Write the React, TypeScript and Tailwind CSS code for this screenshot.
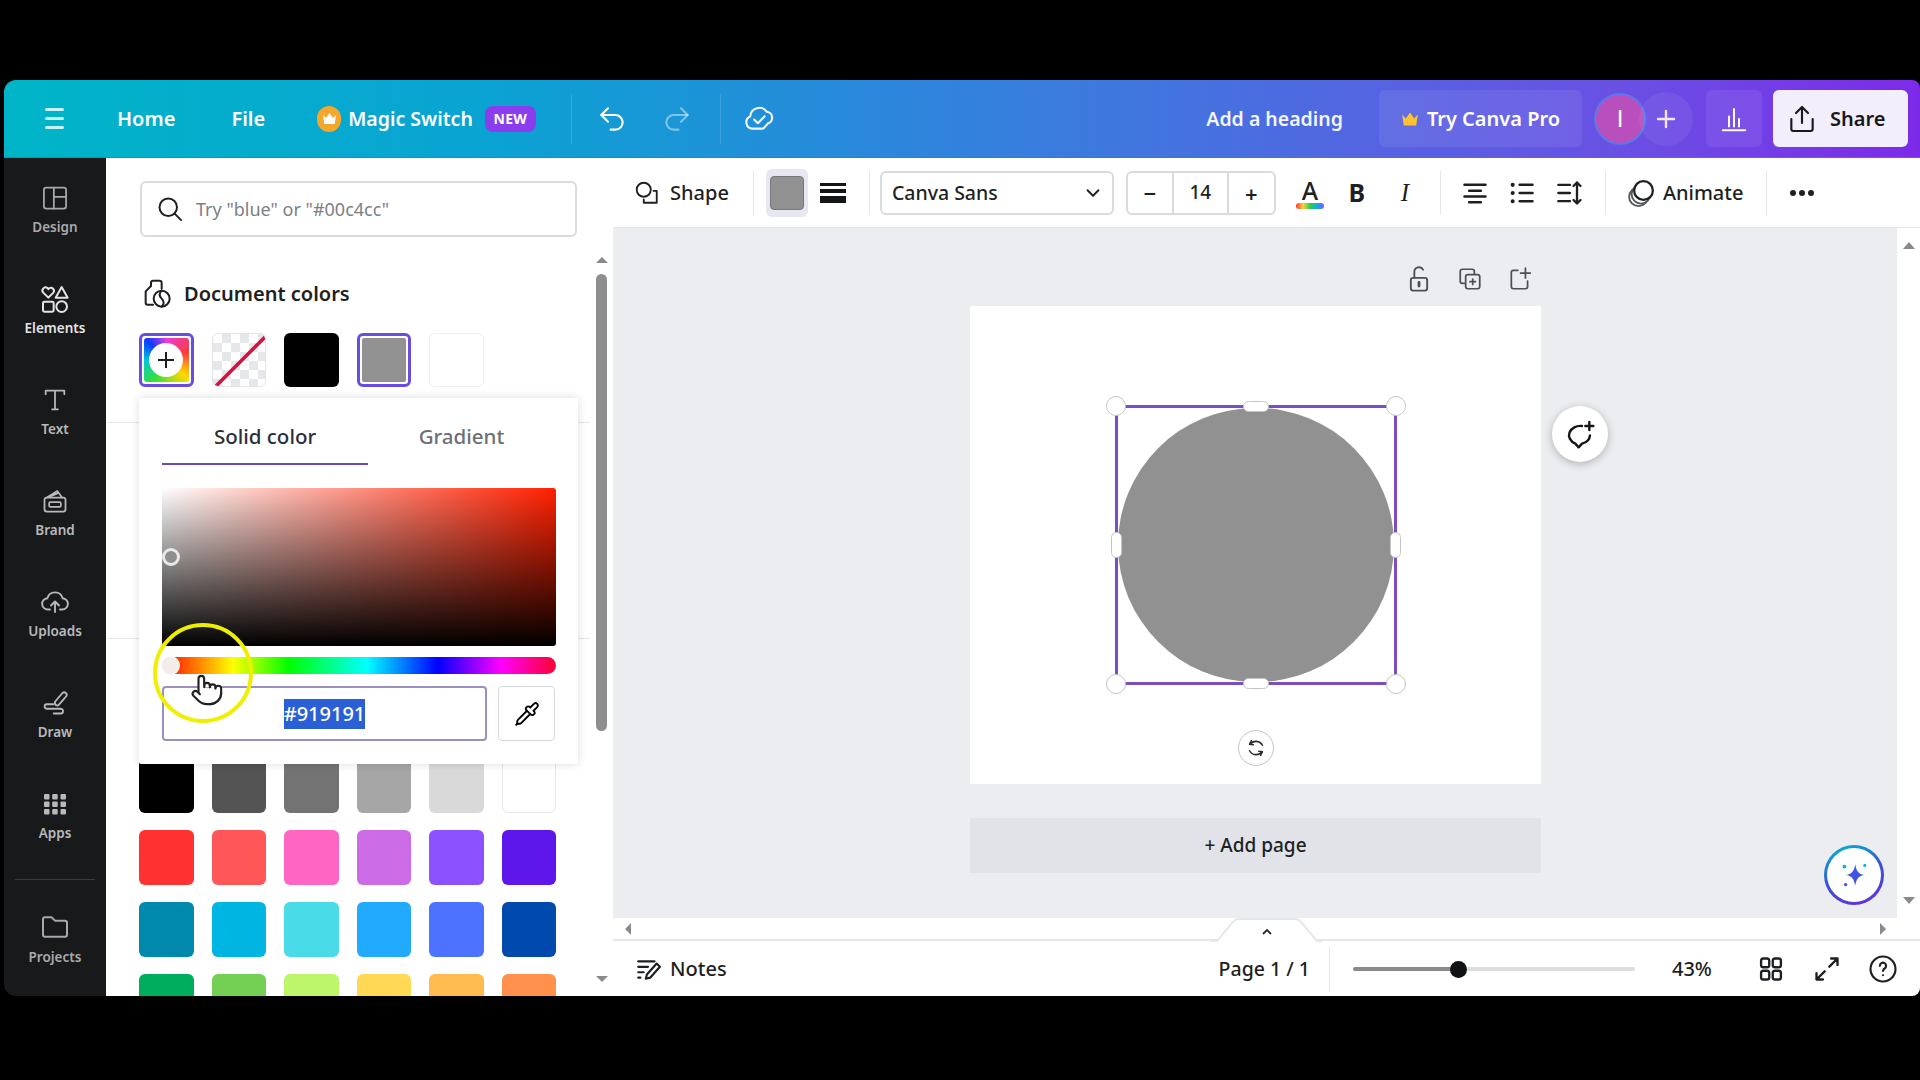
import { ChevronDown, Pipette, Pointer, Redo2, Undo2 } from "lucide-react";
import type { ReactNode } from "react";

const font = { fontFamily: '"Noto Sans", "Open Sans", sans-serif' };

// small wrapper so every hand drawn icon has the same stroke setup
const Ico = ({ size = 28, w = 1.8, className = "", children }: { size?: number; w?: number; className?: string; children: ReactNode }) => (
    <svg
        width={size}
        height={size}
        viewBox="0 0 24 24"
        fill="none"
        stroke="currentColor"
        strokeWidth={w}
        strokeLinecap="round"
        strokeLinejoin="round"
        className={className}
    >
        {children}
    </svg>
);

const railItems: { label: string; color: string; icon: ReactNode }[] = [
    {
        label: "Design",
        color: "text-[#a9a9ac]",
        icon: (
            <Ico w={1.5}>
                <rect x="2.5" y="3" width="19" height="18" rx="2" />
                <path d="M11 3v18M11 11h10.5" />
            </Ico>
        ),
    },
    {
        label: "Elements",
        color: "text-[#e4e4e6]",
        icon: (
            <Ico w={1.5} size={32}>
                <path d="M7 11 3.2 7.2a2.3 2.3 0 0 1 3.3-3.2l.5.6.6-.6a2.3 2.3 0 0 1 3.2 3.2z" />
                <path d="M17 3l4.5 8h-9z" />
                <rect x="3" y="14" width="8" height="7.5" rx="1" />
                <circle cx="17" cy="17.7" r="4" />
            </Ico>
        ),
    },
    {
        label: "Text",
        color: "text-[#b9b9bc]",
        icon: (
            <Ico w={1.5}>
                <path d="M4 7V4h16v3M12 4v16M9.5 20h5" />
            </Ico>
        ),
    },
    {
        label: "Brand",
        color: "text-[#b9b9bc]",
        icon: (
            <Ico w={1.5}>
                <rect x="3" y="9" width="18" height="12" rx="2" />
                <path d="M5 9l9-5.5L18 9M8 8l6-2.5" />
                <rect x="7" y="13" width="10" height="4" rx="1" />
            </Ico>
        ),
    },
    {
        label: "Uploads",
        color: "text-[#b9b9bc]",
        icon: (
            <Ico w={1.5} size={30}>
                <path d="M8 18H6.5a4.5 4.5 0 0 1-.6-9 6.3 6.3 0 0 1 12.2 0 4.5 4.5 0 0 1-.6 9H16" />
                <path d="M12 20v-8M8.8 14.8 12 11.6l3.2 3.2" />
            </Ico>
        ),
    },
    {
        label: "Draw",
        color: "text-[#b9b9bc]",
        icon: (
            <Ico w={1.5} size={30}>
                <path d="M12 11l6-7a2 2 0 0 1 3 2.6L15 13.5c-1 1-3.5.5-3-2.5z" />
                <path d="M11 13H5.5a1.8 1.8 0 0 0 0 3.6h11a1.9 1.9 0 0 1 0 3.8H11" />
            </Ico>
        ),
    },
    {
        label: "Apps",
        color: "text-[#b9b9bc]",
        icon: (
            <svg width="24" height="24" viewBox="0 0 24 24" fill="currentColor">
                <rect x="1" y="2" width="5.5" height="5.5" rx="1" />
                <rect x="9.2" y="2" width="5.5" height="5.5" rx="1" />
                <rect x="17.5" y="2" width="5.5" height="5.5" rx="1" />
                <rect x="1" y="9.5" width="5.5" height="5.5" rx="1" />
                <rect x="9.2" y="9.5" width="5.5" height="5.5" rx="1" />
                <rect x="17.5" y="9.5" width="5.5" height="5.5" rx="1" />
                <rect x="1" y="17" width="5.5" height="5.5" rx="1" />
                <rect x="9.2" y="17" width="5.5" height="5.5" rx="1" />
                <rect x="17.5" y="17" width="5.5" height="5.5" rx="1" />
            </svg>
        ),
    },
];

const swatchRows = [
    ["bg-[#000000]", "bg-[#545454]", "bg-[#737373]", "bg-[#a6a6a6]", "bg-[#d9d9d9]", "bg-[#ffffff] border border-[#e8e8ea]"],
    ["bg-[#ff3131]", "bg-[#ff5757]", "bg-[#ff66c4]", "bg-[#cb6ce6]", "bg-[#8c52ff]", "bg-[#5e17eb]"],
    ["bg-[#0089ad]", "bg-[#00b5e2]", "bg-[#4adbe8]", "bg-[#22aaff]", "bg-[#4c72ff]", "bg-[#004aad]"],
    ["bg-[#00ad5f]", "bg-[#74cf55]", "bg-[#bdf56b]", "bg-[#ffd955]", "bg-[#ffbb50]", "bg-[#ff914d]"],
];

const Sep = ({ className = "" }: { className?: string }) => <div className={`w-px h-[44px] bg-[#e6e7ea] shrink-0 ${className}`} />;

const Header = () => (
    <header className="h-[78px] shrink-0 flex items-center text-white rounded-tl-xl rounded-tr-lg border-b border-[#4a6fdc] bg-[linear-gradient(90deg,#00b5c8_0%,#0aa3d2_25%,#2a88db_45%,#4a6ee0_65%,#6a4fe4_85%,#7d2ae8_100%)]">
        <div className="ml-[41px] w-[19px] flex flex-col gap-[6px]">
            <div className="h-[3px] bg-[#c8f2f6] rounded" />
            <div className="h-[3px] bg-[#c8f2f6] rounded" />
            <div className="h-[3px] bg-[#c8f2f6] rounded" />
        </div>
        <span className="ml-[53px] text-[20px] font-semibold">Home</span>
        <span className="ml-[56px] text-[20px] font-semibold">File</span>
        <div className="ml-[52px] w-[24px] h-[26px] rounded-full bg-[#f5a72c] flex items-center justify-center">
            <svg width="15" height="13" viewBox="0 0 15 13" fill="#fff">
                <path d="M1 3l3 3 3.5-5L11 6l3-3-1.3 9H2.3z" />
            </svg>
        </div>
        <span className="ml-[7px] text-[19.5px] font-semibold">Magic Switch</span>
        <span className="ml-[12px] w-[51px] h-[26px] rounded-[8px] bg-[#8b3ded] text-[14px] font-bold tracking-wide flex items-center justify-center">NEW</span>
        <div className="ml-[35px] w-px h-[50px] bg-[#ffffff22]" />
        <Undo2 size={32} strokeWidth={1.6} className="ml-[24px] text-white" />
        <Redo2 size={32} strokeWidth={1.6} className="ml-[33px] text-[#ffffff70]" />
        <div className="ml-[27px] w-px h-[50px] bg-[#ffffff22]" />
        <Ico size={34} w={1.5} className="ml-[21px] -mt-[2px] text-[#eef6ff]">
            <path d="M7 19.5a4.5 4.5 0 0 1-1.2-8.6A6.5 6.5 0 0 1 17.6 7.600a4.200 4.200 0 0 1 .900 8.100L15 19.500z" />
            <path d="M8.500 13l2.700 2.700 4.800-5" />
        </Ico>
        <div className="ml-auto flex items-center">
            <span className="text-[19.5px] font-semibold text-[#f1f5ff]">Add a heading</span>
            <div className="ml-[36px] w-[203px] h-[57px] rounded-[6px] bg-[#ffffff14] flex items-center justify-center gap-[8px]">
                <svg width="18" height="16" viewBox="0 0 15 13" fill="#ffc233">
                    <path d="M1 2.500l3 3.500L7.500 1 11 6l3-3.500L12.700 12H2.300z" />
                </svg>
                <span className="text-[20px] font-semibold">Try Canva Pro</span>
            </div>
            <div className="ml-[14px] w-[48px] h-[48px] rounded-full bg-[#b94fbc] ring-2 ring-[#5a7ae8] flex items-center justify-center text-[24px]" style={{ fontFamily: '"Liberation Sans", sans-serif' }}>I</div>
            <div className="ml-[-5px] w-[54px] h-[54px] rounded-full bg-[#ffffff10] flex items-center justify-center">
                <svg width="20" height="20" viewBox="0 0 20 20" stroke="#f2e6ff" strokeWidth="2.400" strokeLinecap="round">
                    <path d="M10 2v16M2 10h16" />
                </svg>
            </div>
            <div className="ml-[13px] w-[56px] h-[57px] rounded-[6px] bg-[#ffffff14] flex items-center justify-center">
                <Ico size={30} w={1.6}>
                    <path d="M3 21h18M8 18v-8M12 18V4M16 18v-6" />
                </Ico>
            </div>
            <div className="ml-[11px] mr-[12px] w-[135px] h-[57px] rounded-[6px] bg-[#f2eefc] text-[#18191b] flex items-center pl-[13px] gap-[12px]">
                <Ico size={32} w={1.6}>
                    <path d="M12 15V3M7.500 7.500 12 3l4.500 4.500M4 12v7.500a1.500 1.500 0 0 0 1.500 1.500h13a1.500 1.500 0 0 0 1.500-1.500V12" />
                </Ico>
                <span className="text-[20px] font-semibold">Share</span>
            </div>
        </div>
    </header>
);

const Rail = () => (
    <nav className="w-[102px] shrink-0 bg-[#18191b] rounded-bl-xl flex flex-col items-center overflow-hidden">
        {railItems.map((item) => (
            <div key={item.label} className={`h-[101px] w-full shrink-0 flex flex-col items-center pt-[24px] ${item.color}`}>
                <div className="h-[32px] flex items-center justify-center">{item.icon}</div>
                <span className="mt-[3px] text-[13.5px] font-semibold leading-[20px]">{item.label}</span>
            </div>
        ))}
        <div className="mt-[14px] w-[80px] h-px shrink-0 bg-[#3a3b3e]" />
        <div className="mt-[30px] flex flex-col items-center text-[#a9a9ac]">
            <Ico w={1.5} size={32}>
                <path d="M3 7a1.500 1.500 0 0 1 1.500-1.500h5L12 8h7.500A1.500 1.500 0 0 1 21 9.500v9a1.500 1.500 0 0 1-1.500 1.500h-15A1.500 1.500 0 0 1 3 18.500z" />
            </Ico>
            <span className="mt-[5px] text-[13.5px] font-semibold leading-[20px]">Projects</span>
        </div>
    </nav>
);

const Popover = () => (
    <div className="absolute left-[33px] top-[240px] w-[439px] h-[366px] bg-white shadow-[0_0_10px_rgba(0,0,0,0.14)] rounded-[2px] px-[23px]">
        <div className="flex h-[67px]">
            <div className="w-[206px] border-b-2 border-[#6a49b8] flex items-center justify-center pt-[11px] text-[20.5px] font-medium text-[#2b2f36]">Solid color</div>
            <div className="flex-1 flex items-center justify-center pt-[10px] text-[20.5px] font-medium text-[#6b6f76]">Gradient</div>
        </div>
        <div className="mt-[23px] h-[158px] w-[394px] rounded-[3px] relative bg-[linear-gradient(to_top,#000,transparent),linear-gradient(to_right,#fff,#ff2000)]">
            <div className="absolute left-[0px] top-[60px] w-[18px] h-[18px] rounded-full border-[3px] border-[#e8e8e8] bg-[#8f8f8f]" />
        </div>
        <div className="mt-[11px] h-[17px] w-[394px] rounded-full relative bg-[linear-gradient(90deg,#f00,#ff0_18%,#0f0_32%,#0ff_52%,#00f_70%,#f0f_86%,#f03)]">
            <div className="absolute -left-[1px] -top-[1px] w-[19px] h-[19px] rounded-full bg-[#f4ece8] border border-[#ffffffaa]" />
        </div>
        <div className="mt-[12px] flex justify-between">
            <div className="w-[325px] h-[55px] rounded-[4px] border-2 border-[#9a8fc0] flex items-center justify-center">
                <span className="bg-[#2a5fd6] text-white text-[20px] font-medium leading-[30px]">#919191</span>
            </div>
            <div className="w-[57px] h-[55px] rounded-[4px] border border-[#d6d8dc] flex items-center justify-center">
                <Pipette size={26} strokeWidth={1.7} className="text-black" />
            </div>
        </div>
    </div>
);

const Panel = () => (
    <aside className="w-[507px] shrink-0 bg-white relative flex overflow-hidden">
        <div className="w-[484px] shrink-0 px-[34px] pt-[23px]">
            <div className="w-[437px] h-[56px] rounded-[6px] border-2 border-[#d9dbdf] flex items-center pl-[14px] gap-[12px]">
                <Ico size={28} w={1.7} className="text-[#1d1f23]">
                    <circle cx="10.500" cy="10.500" r="7.500" />
                    <path d="M16 16l5.500 5.500" />
                </Ico>
                <span className="text-[18px] text-[#7b7f86]">Try "blue" or "#00c4cc"</span>
            </div>
            <div className="mt-[45px] h-[24px] flex items-center gap-[11px]">
                <Ico size={32} w={1.500} className="text-[#1d1f23] ml-[1px] shrink-0">
                    <path d="M9 20H5a1.500 1.500 0 0 1-1.500-1.500V10l4-4V3.500A1.500 1.500 0 0 1 9 2h5a1.500 1.500 0 0 1 1.500 1.500V8" />
                    <circle cx="15.500" cy="15.500" r="6" />
                    <path d="M15.500 9.500c-2 2-2 4 0 6s2 4 0 6" />
                </Ico>
                <span className="text-[20px] font-semibold text-[#1d1f23]">Document colors</span>
            </div>
            <div className="mt-[27px] -ml-[1px] grid grid-cols-6 gap-x-[18px] w-[417px]">
                <div className="h-[54px] rounded-[6px] border-[3px] border-[#6a4de0] p-[2px]">
                    <div className="relative w-full h-full rounded-[3px] bg-[conic-gradient(#e83be0_0deg,#ff3b3b_70deg,#ffd800_130deg,#36e03a_210deg,#00c8d8_270deg,#0a3cff_315deg,#e83be0_360deg)] flex items-center justify-center">
                        <div className="w-[34px] h-[34px] rounded-full bg-white flex items-center justify-center">
                            <svg width="18" height="18" viewBox="0 0 18 18" stroke="#1d1f23" strokeWidth="2">
                                <path d="M9 1v16M1 9h16" />
                            </svg>
                        </div>
                    </div>
                </div>
                <div className="h-[54px] rounded-[6px] border border-[#e3e4e7] overflow-hidden bg-[repeating-conic-gradient(#e6e7ea_0_25%,#ffffff_0_50%)] bg-[length:18px_18px]">
                    <svg width="54" height="54" viewBox="0 0 54 54">
                        <path d="M3 52 52 3" stroke="#d4123f" strokeWidth="3.500" />
                    </svg>
                </div>
                <div className="h-[54px] rounded-[6px] bg-black" />
                <div className="h-[54px] rounded-[6px] border-[3px] border-[#6a4de0] p-[2px]">
                    <div className="w-full h-full rounded-[2px] bg-[#919191]" />
                </div>
                <div className="h-[54px] rounded-[6px] bg-white border border-[#eeeff1]" />
            </div>
            <div className="mt-[35px] -mx-[34px] h-[217px] border-y border-[#e6e7ea]" />
            <div className="mt-[119px] -ml-[1px] flex flex-col gap-[17px] w-[417px]">
                {swatchRows.map((row, i) => (
                    <div key={i} className="grid grid-cols-6 gap-x-[18px]">
                        {row.map((c, j) => (
                            <div key={j} className={`h-[55px] rounded-[6px] ${c}`} />
                        ))}
                    </div>
                ))}
            </div>
        </div>
        <div className="w-[23px] shrink-0 flex flex-col items-center pt-[99px] relative">
            <div className="w-0 h-0 border-x-[6px] border-x-transparent border-b-[6px] border-b-[#8a8a8a]" />
            <div className="mt-[11px] w-[11px] h-[457px] rounded-full bg-[#8e8e8e]" />
            <div className="mt-[245px] w-0 h-0 border-x-[6px] border-x-transparent border-t-[6px] border-t-[#8a8a8a]" />
        </div>
        <Popover />
        {/* demo pointer ring over the hue bar */}
        <div className="absolute left-[47px] top-[465px] w-[100px] h-[100px] rounded-full border-[4px] border-[#eef000]" />
        <Pointer size={34} strokeWidth={1.500} fill="#ffffff" className="absolute left-[84px] top-[515px] text-[#222]" />
    </aside>
);

const Toolbar = () => (
    <div className="h-[70px] shrink-0 bg-white flex items-center border-b border-[#e6e7ea]">
        <Ico size={26} w={1.7} className="ml-[21px] text-[#1d1f23] shrink-0">
            <circle cx="9" cy="9" r="6.500" />
            <path d="M18 10h3v11H9v-3" />
        </Ico>
        <span className="ml-[10px] text-[20px] font-medium text-[#1d1f23]">Shape</span>
        <Sep className="ml-[24px]" />
        <div className="ml-[12px] w-[42px] h-[48px] rounded-[6px] bg-[#e6e7f0] flex items-center justify-center">
            <div className="w-[34px] h-[34px] rounded-[4px] bg-[#919191] border border-[#77777a]" />
        </div>
        <div className="ml-[12px] w-[26px] flex flex-col gap-[3px]">
            <div className="h-[3px] bg-[#141518]" />
            <div className="h-[4px] bg-[#141518]" />
            <div className="h-[7px] bg-[#141518]" />
        </div>
        <Sep className="ml-[23px]" />
        <div className="ml-[10px] w-[234px] h-[44px] rounded-[6px] border-2 border-[#d9dbdf] flex items-center justify-between pl-[10px] pr-[8px]">
            <span className="text-[19.5px] font-medium text-[#1d1f23]">Canva Sans</span>
            <ChevronDown size={22} strokeWidth={2} className="text-[#1d1f23]" />
        </div>
        <div className="ml-[12px] w-[150px] h-[44px] rounded-[6px] border-2 border-[#d9dbdf] flex items-center text-[#1d1f23]">
            <div className="w-[44px] text-center text-[22px] font-semibold leading-none">−</div>
            <div className="w-[57px] h-full border-x-2 border-[#d9dbdf] flex items-center justify-center text-[19px] font-medium">14</div>
            <div className="flex-1 text-center text-[22px] font-semibold leading-none">+</div>
        </div>
        <div className="ml-[20px] w-[28px] flex flex-col items-center">
            <span className="text-[25px] font-medium leading-[26px] text-[#1d1f23]">A</span>
            <div className="w-full h-[6px] rounded-full bg-[linear-gradient(90deg,#ff3131,#ffd43b,#36c94a,#00b5e2,#8c52ff)]" />
        </div>
        <span className="ml-[22px] w-[22px] text-center text-[25px] font-bold text-[#1d1f23]">B</span>
        <span className="ml-[27px] w-[20px] text-center text-[25px] italic text-[#1d1f23]" style={{ fontFamily: '"Liberation Serif", serif' }}>I</span>
        <Sep className="ml-[25px]" />
        <Ico size={28} w={2.200} className="ml-[20px] text-[#1d1f23] shrink-0">
            <path d="M3 5h18M7 10h10M3 15h18M7 20h10" />
        </Ico>
        <Ico size={28} w={2.200} className="ml-[19px] text-[#1d1f23] shrink-0">
            <path d="M10 5h11M10 12h11M10 19h11" />
            <path d="M4 5h.01M4 12h.01M4 19h.01" strokeWidth="3.500" />
        </Ico>
        <Ico size={28} w={2} className="ml-[20px] text-[#1d1f23] shrink-0">
            <path d="M2 5h10M2 12h10M2 19h10M18 3v18M15 6l3-3 3 3M15 18l3 3 3-3" />
        </Ico>
        <Sep className="ml-[21px]" />
        <Ico size={30} w={1.500} className="ml-[20px] text-[#55585e] shrink-0">
            <circle cx="10" cy="15" r="7.500" />
            <circle cx="12" cy="13" r="7.500" fill="#fff" />
            <circle cx="14" cy="10" r="7.500" fill="#fff" stroke="#1d1f23" strokeWidth="1.800" />
        </Ico>
        <span className="ml-[7px] text-[20px] font-medium text-[#1d1f23]">Animate</span>
        <Sep className="ml-[23px]" />
        <div className="ml-[23px] flex gap-[3px]">
            <div className="w-[6px] h-[6px] rounded-full bg-[#1d1f23]" />
            <div className="w-[6px] h-[6px] rounded-full bg-[#1d1f23]" />
            <div className="w-[6px] h-[6px] rounded-full bg-[#1d1f23]" />
        </div>
    </div>
);

const Stage = () => (
    <div className="flex-1 flex min-h-0">
        <div className="flex-1 relative bg-[#ebedf0] pl-[357px] pt-[35px]">
            <div className="w-[571px] h-[32px] flex justify-end items-center gap-[24px] pr-[8px] text-[#4b4f56]">
                <Ico size={28} w={1.600}>
                    <rect x="5" y="11" width="14" height="11" rx="2" />
                    <path d="M8 11V6a4 4 0 0 1 7.500-2" />
                    <path d="M12 15v3" strokeWidth="2.400" />
                </Ico>
                <Ico size={26} w={1.600}>
                    <rect x="3" y="3" width="13" height="13" rx="2" />
                    <rect x="8" y="8" width="13" height="13" rx="2" fill="#ebedf0" />
                    <path d="M14.500 12v5M12 14.500h5" />
                </Ico>
                <Ico size={26} w={1.600}>
                    <path d="M10 4H6a2 2 0 0 0-2 2v13a2 2 0 0 0 2 2h11a2 2 0 0 0 2-2v-5M17 2v9M12.500 6.500h9" />
                </Ico>
            </div>
            <div className="mt-[11px] w-[571px] h-[478px] bg-white relative">
                <div className="absolute left-[145px] top-[99px] w-[282px] h-[280px] border-[3px] border-[#7a4fc4]">
                    <div className="w-full h-full rounded-full bg-[#919191]" />
                    <div className="absolute -left-[12px] -top-[12px] w-[20px] h-[20px] rounded-full bg-white border border-[#c4c4c8]" />
                    <div className="absolute -right-[12px] -top-[12px] w-[20px] h-[20px] rounded-full bg-white border border-[#c4c4c8]" />
                    <div className="absolute -left-[12px] -bottom-[12px] w-[20px] h-[20px] rounded-full bg-white border border-[#c4c4c8]" />
                    <div className="absolute -right-[12px] -bottom-[12px] w-[20px] h-[20px] rounded-full bg-white border border-[#c4c4c8]" />
                    <div className="absolute left-[125px] -top-[7px] w-[26px] h-[11px] rounded-full bg-white border border-[#c4c4c8]" />
                    <div className="absolute left-[125px] -bottom-[7px] w-[26px] h-[11px] rounded-full bg-white border border-[#c4c4c8]" />
                    <div className="absolute -left-[7px] top-[124px] w-[11px] h-[26px] rounded-full bg-white border border-[#c4c4c8]" />
                    <div className="absolute -right-[7px] top-[124px] w-[11px] h-[26px] rounded-full bg-white border border-[#c4c4c8]" />
                </div>
                <div className="absolute left-[268px] top-[424px] w-[36px] h-[36px] rounded-full bg-white border border-[#c4c4c8] flex items-center justify-center text-[#2a2c30]">
                    <Ico size={22} w={1.700}>
                        <path d="M7 4 5 8l4 .500M17 20l2-4-4-.500" />
                        <path d="M5.500 8A8 8 0 0 1 19 9M18.500 16A8 8 0 0 1 5 15" />
                    </Ico>
                </div>
            </div>
            <div className="mt-[34px] w-[571px] h-[55px] bg-[#e1e3e8] flex items-center justify-center text-[19px] font-medium text-[#1d1f23]">+ Add page</div>
            {/* floating buttons */}
            <div className="absolute left-[939px] top-[178px] w-[56px] h-[56px] rounded-full bg-white shadow-[0_2px_8px_rgba(0,0,0,0.25)] flex items-center justify-center text-[#141518]">
                <Ico size={32} w={1.800}>
                    <path d="M13.500 6A8.500 7 0 0 0 8.500 19.200L11 22l2.500-2.800A8.500 7 0 0 0 19.500 13" />
                    <path d="M19 3v6M16 6h6" />
                </Ico>
            </div>
            <div className="absolute left-[1211px] top-[617px] w-[60px] h-[60px] rounded-full p-[3px] bg-[linear-gradient(160deg,#00bcd0,#3a50d8,#6a2ce0)]">
                <div className="w-full h-full rounded-full bg-white flex items-center justify-center">
                    <svg width="36" height="36" viewBox="0 0 30 30" fill="#3f55e0">
                        <path d="M16 6c1 6 3 8.500 8 9-5 .500-7 3-8 9-1-6-3-8.500-8-9 5-.500 7-3 8-9z" />
                        <circle cx="7" cy="8" r="1.600" fill="#11b5c8" />
                        <circle cx="24" cy="7" r="1.300" fill="#11b5c8" />
                        <circle cx="8" cy="23" r="1.400" fill="#3f55e0" />
                    </svg>
                </div>
            </div>
        </div>
        <div className="w-[23px] shrink-0 bg-white flex flex-col items-center justify-between pt-[14px] pb-[14px]">
            <div className="w-0 h-0 border-x-[6px] border-x-transparent border-b-[7px] border-b-[#8a8a8a]" />
            <div className="w-0 h-0 border-x-[6px] border-x-transparent border-t-[7px] border-t-[#8a8a8a]" />
        </div>
    </div>
);

const BottomBar = () => (
    <>
        <div className="h-[23px] shrink-0 bg-white border-b-2 border-[#e6e7ea] relative flex items-center justify-between px-[12px] pr-[34px]">
            <div className="w-0 h-0 border-y-[6px] border-y-transparent border-r-[6px] border-r-[#8a8a8a]" />
            <div className="w-0 h-0 border-y-[6px] border-y-transparent border-l-[6px] border-l-[#8a8a8a]" />
            <svg width="112" height="24" viewBox="0 0 112 24" className="absolute left-[598px] top-[0px]">
                <path d="M0 23h6L22 4q2-3 6-3h56q4 0 6 3l16 19h6" fill="#fff" stroke="#e6e7ea" strokeWidth="2" />
                <path d="M52 16l4-4 4 4" fill="none" stroke="#2a2c30" strokeWidth="1.800" />
            </svg>
        </div>
        <footer className="h-[55px] shrink-0 bg-white rounded-br-lg flex items-center text-[#1d1f23]">
            <Ico size={26} w={2} className="ml-[22px] shrink-0">
                <path d="M3 5h15M3 10h9M3 15h5M3 20h2" />
                <path d="M10 21l1-4 9-10 3 3-9 10z" />
            </Ico>
            <span className="ml-[9px] text-[20px] font-medium">Notes</span>
            <span className="ml-[492px] text-[19.5px] font-medium">Page 1 / 1</span>
            <div className="ml-[19px] w-px h-[44px] bg-[#e6e7ea]" />
            <div className="ml-[23px] w-[282px] h-[4px] rounded-full bg-[#dcdde0] relative">
                <div className="w-[105px] h-full rounded-full bg-[#8a8a8e]" />
                <div className="absolute left-[97px] -top-[6px] w-[17px] h-[17px] rounded-full bg-[#111214]" />
            </div>
            <span className="ml-[37px] text-[20px] font-medium">43%</span>
            <Ico size={28} w={2} className="ml-[45px] shrink-0">
                <rect x="3.500" y="3" width="7" height="7.500" rx="2" />
                <rect x="13.500" y="3" width="7" height="7.500" rx="2" />
                <rect x="3.500" y="13.500" width="7" height="7.500" rx="2" />
                <rect x="13.500" y="13.500" width="7" height="7.500" rx="2" />
            </Ico>
            <Ico size={28} w={2} className="ml-[28px] shrink-0">
                <path d="M14 10l7-7M15.500 3H21v5.500M10 14l-7 7M3 15.500V21h5.500" />
            </Ico>
            <Ico size={30} w={1.700} className="ml-[27px] shrink-0">
                <circle cx="12" cy="12" r="10" />
                <path d="M9.500 9.500a2.500 2.500 0 1 1 3.800 2.100c-.8.500-1.300 1-1.300 2" />
                <path d="M12 17h.01" />
            </Ico>
        </footer>
    </>
);

const App = () => (
    <div className="w-[1920px] h-[1080px] bg-black pt-[80px] pb-[84px] pl-[4px] overflow-hidden flex" style={font}>
        <div className="w-full h-full flex flex-col">
            <Header />
            <div className="flex-1 flex min-h-0">
                <Rail />
                <Panel />
                <div className="flex-1 flex flex-col min-w-0">
                    <Toolbar />
                    <Stage />
                    <BottomBar />
                </div>
            </div>
        </div>
    </div>
);

export default App;
